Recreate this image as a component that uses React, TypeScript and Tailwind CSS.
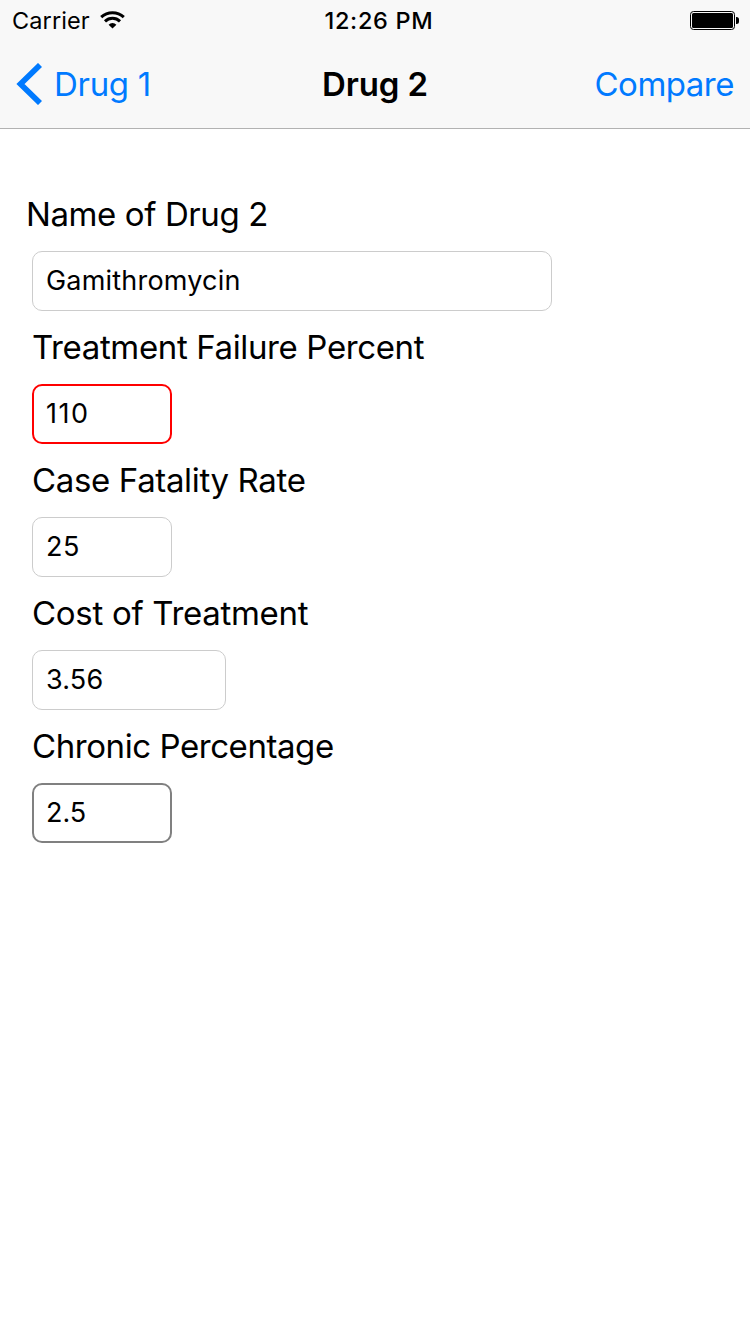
type FieldProps = { label: string; value: string; box: string; labelClass: string; valueClass: string };

function Field({ label, value, box, labelClass, valueClass }: FieldProps) {
  return (
    <div className="h-[133px]">
      <div className="flex h-[52px] items-center">
        <label className={`whitespace-nowrap text-[33px] leading-[40px] ${labelClass}`}>{label}</label>
      </div>
      <div className={`mt-[11px] flex h-[60px] items-center rounded-[10px] pb-[1px] ${box}`}>
        <span className={`text-[27px] leading-[34px] ${valueClass}`}>{value}</span>
      </div>
    </div>
  );
}

export default function App() {
  return (
    <div className="h-[1334px] w-[750px] overflow-hidden bg-white font-['Inter',sans-serif] text-black">
      <header className="h-[129px] border-b border-[#b2b2b2] bg-[#f8f8f8]">
        <div className="grid h-[40px] grid-cols-3 items-start text-[23.5px] leading-[40px]">
          <div className="flex items-start gap-[10px] pl-[12px]">
            <span className="h-[40px] w-[78px] whitespace-nowrap pt-[1px] tracking-[0.1px]">Carrier</span>
            <svg className="mt-[11px]" width="25" height="18" viewBox="0 0 25 18" fill="none" stroke="#000" strokeWidth="3">
              <path d="M1.2 6.2a16.5 16.5 0 0 1 22.6 0" />
              <path d="M5 10.3a11 11 0 0 1 15 0" />
              <path d="M12.5 17.6l-3.9-3.9a5.6 5.6 0 0 1 7.8 0z" fill="#000" stroke="none" />
            </svg>
          </div>
          <span className="h-[40px] pl-[8px] pt-[1px] text-center font-medium tracking-[0.7px]">12:26 PM</span>
          <div className="flex justify-end pr-[10px] pt-[11px]">
            <svg width="50" height="19" viewBox="0 0 50 19">
              <rect x="0.5" y="0.5" width="44" height="18" rx="3" fill="none" stroke="#000" />
              <rect x="2" y="2" width="41" height="15" rx="1.5" />
              <path d="M46 6h.5a2.5 2.5 0 0 1 2.5 2.5v2a2.5 2.5 0 0 1-2.5 2.5h-.5z" />
            </svg>
          </div>
        </div>
        <div className="grid h-[88px] grid-cols-3 items-center text-[33px] leading-[88px]">
          <div className="flex items-center gap-[11px] pl-[16px] text-[#007aff]">
            <svg width="27" height="42" viewBox="0 0 27 42" fill="none" stroke="currentColor" strokeWidth="5.7">
              <path d="M24 2L4.5 21l19.5 19" />
            </svg>
            <span className="tracking-[-0.3px]">Drug 1</span>
          </div>
          <span className="text-center font-semibold tracking-[-0.1px]">Drug 2</span>
          <span className="pr-[16px] text-right tracking-[-0.5px] text-[#007aff]">Compare</span>
        </div>
      </header>
      <main className="pl-[32px] pt-[59px]">
        <Field label="Name of Drug 2" value="Gamithromycin" box="w-[520px] border border-[#ccc] pl-[13px]" labelClass="-ml-[6px] tracking-[-0.4px]" valueClass="tracking-[0.2px]" />
        <Field label="Treatment Failure Percent" value="110" box="w-[140px] border-2 border-[#f00] pl-[12px]" labelClass="tracking-[-0.37px]" valueClass="tracking-[1.5px]" />
        <Field label="Case Fatality Rate" value="25" box="w-[140px] border border-[#ccc] pl-[13px]" labelClass="tracking-[-0.35px]" valueClass="tracking-[0.5px]" />
        <Field label="Cost of Treatment" value="3.56" box="w-[194px] border border-[#ccc] pl-[13px]" labelClass="tracking-[-0.3px]" valueClass="tracking-[0.2px]" />
        <Field label="Chronic Percentage" value="2.5" box="w-[140px] border-2 border-[#808080] pl-[12px]" labelClass="tracking-[-0.43px]" valueClass="" />
      </main>
    </div>
  );
}
